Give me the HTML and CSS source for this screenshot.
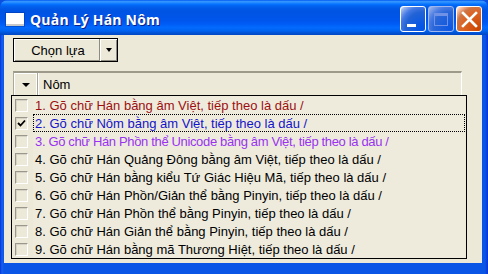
FILE: index.html
```html
<!DOCTYPE html>
<html lang="vi">
<head>
<meta charset="utf-8">
<title>Quản Lý Hán Nôm</title>
<link rel="stylesheet" href="styles.css">
</head>
<body>
<div class="window">
  <div class="titlebar">
    <span class="app-icon"></span>
    <span class="title">Quản Lý Hán Nôm</span>
    <div class="controls">
      <span class="ctl min"><span class="min-bar"></span></span>
      <span class="ctl max"><span class="max-box"></span></span>
      <span class="ctl close">
        <svg width="17" height="17" viewBox="0 0 17 17"><path d="M2 2 L15 15 M15 2 L2 15" stroke="#fff" stroke-width="2.6" stroke-linecap="square" fill="none"/></svg>
      </span>
    </div>
  </div>
  <div class="client">
    <div class="toolbar">
      <div class="split-btn">
        <span class="split-main">Chọn lựa</span>
        <span class="split-arrow"><span class="tri"></span></span>
      </div>
    </div>
    <div class="header">
      <div class="hcell hcell-first"><span class="tri tri-h"></span></div>
      <div class="hcell hcell-name">Nôm</div>
    </div>
    <ul class="list">
      <li class="row"><span class="check"></span><span class="label c-red">1. Gõ chữ Hán bằng âm Việt, tiếp theo là dấu /</span></li>
      <li class="row"><span class="check checked"><svg width="9" height="9" viewBox="0 0 9 9"><path d="M1 4 L3.5 6.5 L8 1.5" stroke="#000" stroke-width="1.8" fill="none"/></svg></span><span class="label c-blue focus">2. Gõ chữ Nôm bằng âm Việt, tiếp theo là dấu /</span></li>
      <li class="row"><span class="check"></span><span class="label c-purple narrow">3. Gõ chữ Hán Phồn thể Unicode bằng âm Việt, tiếp theo là dấu /</span></li>
      <li class="row"><span class="check"></span><span class="label">4. Gõ chữ Hán Quảng Đông bằng âm Việt, tiếp theo là dấu /</span></li>
      <li class="row"><span class="check"></span><span class="label">5. Gõ chữ Hán bằng kiểu Tứ Giác Hiệu Mã, tiếp theo là dấu /</span></li>
      <li class="row"><span class="check"></span><span class="label">6. Gõ chữ Hán Phồn/Giản thể bằng Pinyin, tiếp theo là dấu /</span></li>
      <li class="row"><span class="check"></span><span class="label">7. Gõ chữ Hán Phồn thể bằng Pinyin, tiếp theo là dấu /</span></li>
      <li class="row"><span class="check"></span><span class="label">8. Gõ chữ Hán Giản thể bằng Pinyin, tiếp theo là dấu /</span></li>
      <li class="row"><span class="check"></span><span class="label">9. Gõ chữ Hán bằng mã Thương Hiệt, tiếp theo là dấu /</span></li>
    </ul>
  </div>
</div>
</body>
</html>
```
FILE: styles.css
```css
html, body {
  margin: 0;
  padding: 0;
  width: 488px;
  height: 274px;
  overflow: hidden;
  background: #0b4fe0;
}

.window {
  width: 488px;
  height: 274px;
  display: flex;
  flex-direction: column;
  background: linear-gradient(to right, #0831d9 0, #1660f0 2px, #0b55e6 4px, #0b55e6 calc(100% - 3px), #0831d9 100%);
  border-radius: 8px 8px 0 0;
  overflow: hidden;
}

.titlebar {
  height: 35px;
  flex: none;
  display: flex;
  align-items: center;
  padding-left: 6px;
  background: linear-gradient(to bottom,
    #0058ee 0%, #3593ff 4%, #288eff 7%, #127dff 10%, #036ffc 13%,
    #0262ee 18%, #0057e5 26%, #0054e3 32%, #0055eb 58%, #005bf5 68%,
    #026afe 78%, #0062ef 88%, #0052d6 94%, #0046c2 100%);
}

.app-icon {
  width: 18px;
  height: 11px;
  background: #fff;
  border-bottom: 2px solid #c8c8c8;
  box-shadow: 0 0 0 1px rgba(0, 40, 140, 0.35);
  margin-top: 4px;
  flex: none;
}

.title {
  margin-left: 6px;
  margin-top: 4px;
  font-family: "Open Sans", "DejaVu Sans", sans-serif;
  font-weight: 700;
  font-size: 14px;
  color: #fff;
  text-shadow: 1px 1px 0 #0a1f8a;
  letter-spacing: 0.2px;
}

.controls {
  margin-left: auto;
  margin-right: 6px;
  margin-top: 3px;
  display: flex;
  gap: 2px;
}

.ctl {
  width: 26px;
  height: 26px;
  box-sizing: border-box;
  border: 1px solid #fff;
  border-radius: 3px;
  position: relative;
  display: flex;
  align-items: center;
  justify-content: center;
}

.min {
  background: radial-gradient(circle at 90% 90%, #0054e9 0%, #2263d5 55%, #4479e4 72%, #a3bbec 92%, #fff 100%);
}

.min-bar {
  position: absolute;
  left: 6px;
  top: 17px;
  width: 9px;
  height: 3px;
  background: #fff;
}

.max {
  border-color: #9fb7ee;
  background: radial-gradient(circle at 90% 90%, #0a56e4 0%, #2a66d8 55%, #4a7ce2 72%, #8aa8e8 92%, #b4c6f0 100%);
}

.max-box {
  width: 14px;
  height: 13px;
  box-sizing: border-box;
  border: 1px solid #6f92e6;
  border-top-width: 3px;
}

.close {
  background: radial-gradient(circle at 90% 90%, #cc4600 0%, #dc6527 55%, #cd7546 72%, #ffccb2 92%, #fff 100%);
}

.close svg {
  display: block;
}

.client {
  flex: 1;
  margin: 0 6px 11px 4px;
  background: #ece9d8;
  display: flex;
  flex-direction: column;
  font-family: "Liberation Sans", Arial, sans-serif;
  font-size: 13px;
  color: #000;
}

.toolbar {
  padding: 3px 0 0 9px;
  display: flex;
}

.split-btn {
  display: flex;
  height: 24px;
  box-sizing: border-box;
  border: 1px solid #000;
  background: #ece9d8;
  box-shadow: inset 1px 1px 0 #fff, inset -1px -1px 0 #8e8c80;
}

.split-main {
  width: 86px;
  display: flex;
  align-items: center;
  justify-content: center;
  padding-left: 3px;
  box-sizing: border-box;
  border-right: 1px solid #8e8c80;
}

.split-arrow {
  width: 17px;
  display: flex;
  align-items: center;
  justify-content: center;
  border-left: 1px solid #fff;
  box-sizing: border-box;
}

.tri {
  width: 0;
  height: 0;
  border-left: 3.5px solid transparent;
  border-right: 3.5px solid transparent;
  border-top: 4px solid #000;
}

.header {
  margin: 9px 0 0 9px;
  width: 449px;
  height: 24px;
  box-sizing: border-box;
  display: flex;
  border-top: 2px solid #9d9a8c;
  border-left: 1px solid #aca899;
  border-right: 1px solid #fff;
  background: #ece9d8;
}

.hcell {
  display: flex;
  align-items: center;
}

.hcell-first {
  width: 24px;
  flex: none;
  justify-content: center;
  border-right: 1px solid #aca899;
  box-shadow: inset -1px 0 0 #fff, inset 1px 1px 0 #fff;
  box-sizing: border-box;
}

.tri-h {
  border-left-width: 4px;
  border-right-width: 4px;
  margin-top: 2px;
}

.hcell-name {
  padding-left: 5px;
  box-shadow: inset 1px 0 0 #fff;
}

.list {
  list-style: none;
  margin: 0 0 0 7px;
  padding: 0;
  width: 456px;
  box-sizing: border-box;
  border: 1px solid #000;
  background: #ece9d8;
}

.row {
  height: 18px;
  display: flex;
  align-items: center;
}

.check {
  width: 13px;
  height: 13px;
  box-sizing: border-box;
  margin-left: 3px;
  flex: none;
  border: 1px solid;
  border-color: #9a988c #fff #fff #9a988c;
  box-shadow: inset 1px 1px 0 #d6d3c4;
  display: flex;
  align-items: center;
  justify-content: center;
}

.label {
  flex: 1;
  height: 18px;
  box-sizing: border-box;
  margin-left: 5px;
  margin-right: 1px;
  padding-left: 1px;
  display: flex;
  align-items: center;
  border: 1px dotted transparent;
  white-space: nowrap;
  background: #eeebdd;
}

.label.focus {
  border-color: #000;
}

.label.narrow {
  letter-spacing: -0.35px;
}

.c-red { color: #9c1010; }
.c-blue { color: #1414c8; }
.c-purple { color: #9933f0; }
```
